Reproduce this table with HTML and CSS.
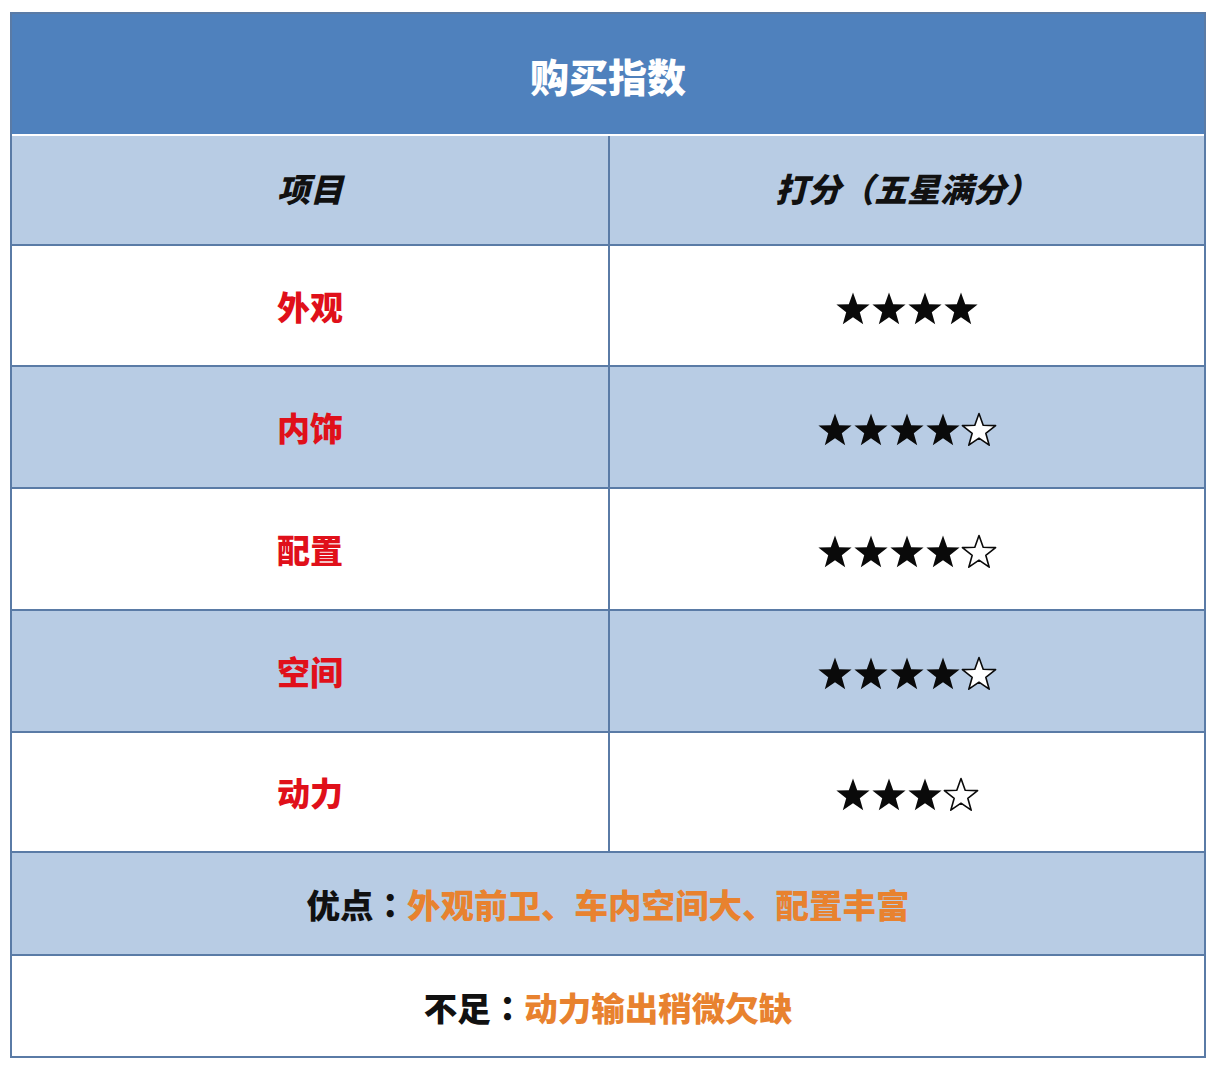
FILE: index.html
```html
<!DOCTYPE html>
<html lang="zh">
<head>
<meta charset="utf-8">
<link rel="stylesheet" href="styles.css">
</head>
<body>
<svg width="0" height="0" class="defs">
  <defs>
    <polygon id="star" points="18,1.5 22.2,13.2 34.6,13.6 24.8,21.3 28.2,33.2 18,26.2 7.8,33.2 11.2,21.3 1.4,13.6 13.8,13.2"/>
  </defs>
</svg>
<div class="sheet">
  <div class="title">购买指数</div>
  <div class="grid">
    <div class="cell head left">项目</div>
    <div class="cell head">打分<span class="p">（</span>五星满分<span class="p">）</span></div>

    <div class="cell white left red">外观</div>
    <div class="cell white"><span class="stars">
      <svg class="s" viewBox="0 0 36 36"><use href="#star"/></svg><svg class="s" viewBox="0 0 36 36"><use href="#star"/></svg><svg class="s" viewBox="0 0 36 36"><use href="#star"/></svg><svg class="s" viewBox="0 0 36 36"><use href="#star"/></svg>
    </span></div>

    <div class="cell blue left red">内饰</div>
    <div class="cell blue"><span class="stars">
      <svg class="s" viewBox="0 0 36 36"><use href="#star"/></svg><svg class="s" viewBox="0 0 36 36"><use href="#star"/></svg><svg class="s" viewBox="0 0 36 36"><use href="#star"/></svg><svg class="s" viewBox="0 0 36 36"><use href="#star"/></svg><svg class="s o" viewBox="0 0 36 36"><use href="#star"/></svg>
    </span></div>

    <div class="cell white left red">配置</div>
    <div class="cell white"><span class="stars">
      <svg class="s" viewBox="0 0 36 36"><use href="#star"/></svg><svg class="s" viewBox="0 0 36 36"><use href="#star"/></svg><svg class="s" viewBox="0 0 36 36"><use href="#star"/></svg><svg class="s" viewBox="0 0 36 36"><use href="#star"/></svg><svg class="s o" viewBox="0 0 36 36"><use href="#star"/></svg>
    </span></div>

    <div class="cell blue left red">空间</div>
    <div class="cell blue"><span class="stars">
      <svg class="s" viewBox="0 0 36 36"><use href="#star"/></svg><svg class="s" viewBox="0 0 36 36"><use href="#star"/></svg><svg class="s" viewBox="0 0 36 36"><use href="#star"/></svg><svg class="s" viewBox="0 0 36 36"><use href="#star"/></svg><svg class="s o" viewBox="0 0 36 36"><use href="#star"/></svg>
    </span></div>

    <div class="cell white left red last">动力</div>
    <div class="cell white last"><span class="stars">
      <svg class="s" viewBox="0 0 36 36"><use href="#star"/></svg><svg class="s" viewBox="0 0 36 36"><use href="#star"/></svg><svg class="s" viewBox="0 0 36 36"><use href="#star"/></svg><svg class="s o" viewBox="0 0 36 36"><use href="#star"/></svg>
    </span></div>
  </div>
  <div class="note blue">优点<span class="p">：</span><span class="orange">外观前卫、车内空间大、配置丰富</span></div>
  <div class="note white end">不足<span class="p">：</span><span class="orange">动力输出稍微欠缺</span></div>
</div>
</body>
</html>
```

FILE: styles.css
```css
html, body {
  margin: 0;
  padding: 0;
  background: #fff;
}
body {
  font-family: "Noto Sans CJK SC", "Noto Sans", sans-serif;
}
.defs {
  position: absolute;
  width: 0;
  height: 0;
}
.sheet {
  margin: 12px 0 0 10px;
  width: 1196px;
  box-sizing: border-box;
  border: 2px solid #5a7ba6;
}
.title {
  height: 122px;
  background: #4f81bd;
  border-bottom: 2px solid #ffffff;
  color: #fff;
  font-size: 39px;
  font-weight: 900;
  display: flex;
  align-items: center;
  justify-content: center;
  padding-top: 2px;
  box-sizing: border-box;
}
.grid {
  display: grid;
  grid-template-columns: 598px 594px;
  grid-template-rows: 110px 121px 122px 122px 122px 120px;
}
.cell {
  display: flex;
  align-items: center;
  justify-content: center;
  border-bottom: 2px solid #5a7ba6;
  box-sizing: border-box;
  font-size: 33px;
  font-weight: 900;
}
.cell.left {
  border-right: 2px solid #5a7ba6;
}
.head {
  background: #b8cce4;
  color: #111;
  font-style: italic;
  padding-bottom: 4px;
}
.p {
  font-family: "Noto Sans CJK JP", "Noto Sans CJK SC", sans-serif;
}
.white { background: #fff; }
.blue { background: #b8cce4; }
.red {
  color: #e0101a;
}
.stars {
  display: flex;
  padding-top: 6px;
}
.s {
  width: 36px;
  height: 36px;
  display: block;
}
.s use {
  fill: #0a0a0a;
}
.s.o use {
  fill: #fff;
  stroke: #0a0a0a;
  stroke-width: 1.6;
  stroke-linejoin: round;
}
.note {
  display: flex;
  align-items: center;
  justify-content: center;
  font-size: 33.5px;
  font-weight: 900;
  color: #111;
  box-sizing: border-box;
}
.note.blue {
  height: 103px;
  border-bottom: 2px solid #5a7ba6;
}
.note.end {
  height: 100px;
}
.orange {
  color: #e8822f;
}
```
